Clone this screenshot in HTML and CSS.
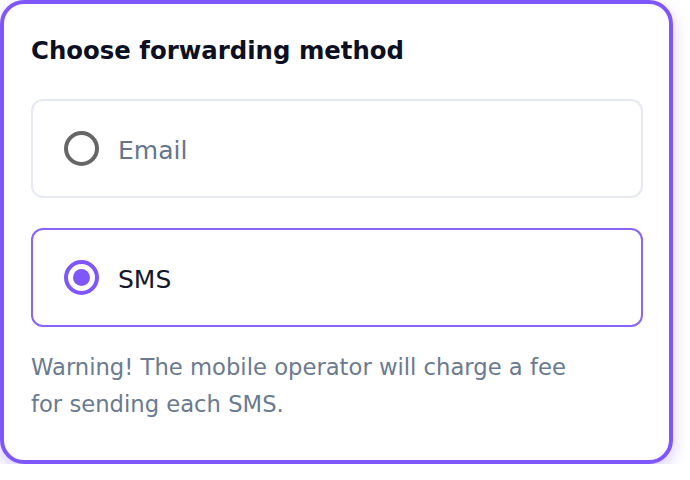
FILE: index.html
```html
<!DOCTYPE html>
<html lang="en">
<head>
<meta charset="utf-8">
<link rel="stylesheet" href="styles.css">
</head>
<body>
<div class="card">
  <h2 class="title">Choose forwarding method</h2>
  <div class="options">
    <label class="option">
      <span class="radio"></span>
      <span class="option-label">Email</span>
    </label>
    <label class="option option-selected">
      <span class="radio radio-checked"></span>
      <span class="option-label">SMS</span>
    </label>
  </div>
  <p class="warning">Warning! The mobile operator will charge a fee for sending each SMS.</p>
</div>
</body>
</html>
```
FILE: styles.css
```css
* { box-sizing: border-box; }
html, body { margin: 0; padding: 0; background: #ffffff; }
body { font-family: "DejaVu Sans", "Noto Sans", sans-serif; }
.card {
  width: 673px;
  height: 464px;
  border: 4px solid #7f56fb;
  border-radius: 24px;
  background: #fff;
  padding: 30px 26px 0 27px;
  box-shadow: 0 6px 16px rgba(127, 86, 251, 0.3);
}
.title {
  margin: 0;
  font-size: 24.4px;
  line-height: 33px;
  font-weight: 700;
  color: #0d0f22;
}
.options {
  margin-top: 32px;
  display: flex;
  flex-direction: column;
  gap: 30px;
}
.option {
  height: 99px;
  display: flex;
  align-items: center;
  gap: 19px;
  padding-left: 31px;
  border: 2px solid #e6e9ef;
  border-radius: 12px;
}
.option-selected { border: 2px solid #8a63fb; }
.radio {
  width: 35px;
  height: 35px;
  border-radius: 50%;
  border: 4px solid #666666;
  flex: none;
}
.radio-checked {
  border-color: #7f56fb;
  display: flex;
  align-items: center;
  justify-content: center;
}
.radio-checked::after {
  content: "";
  width: 17px;
  height: 17px;
  border-radius: 50%;
  background: #7f56fb;
}
.option-label {
  font-size: 25px;
  padding-top: 3px;
  color: #65758d;
}
.option-selected .option-label { color: #15172a; }
.warning {
  margin: 22px 0 0;
  max-width: 560px;
  font-size: 22.7px;
  line-height: 37px;
  color: #6a7a90;
}
```
